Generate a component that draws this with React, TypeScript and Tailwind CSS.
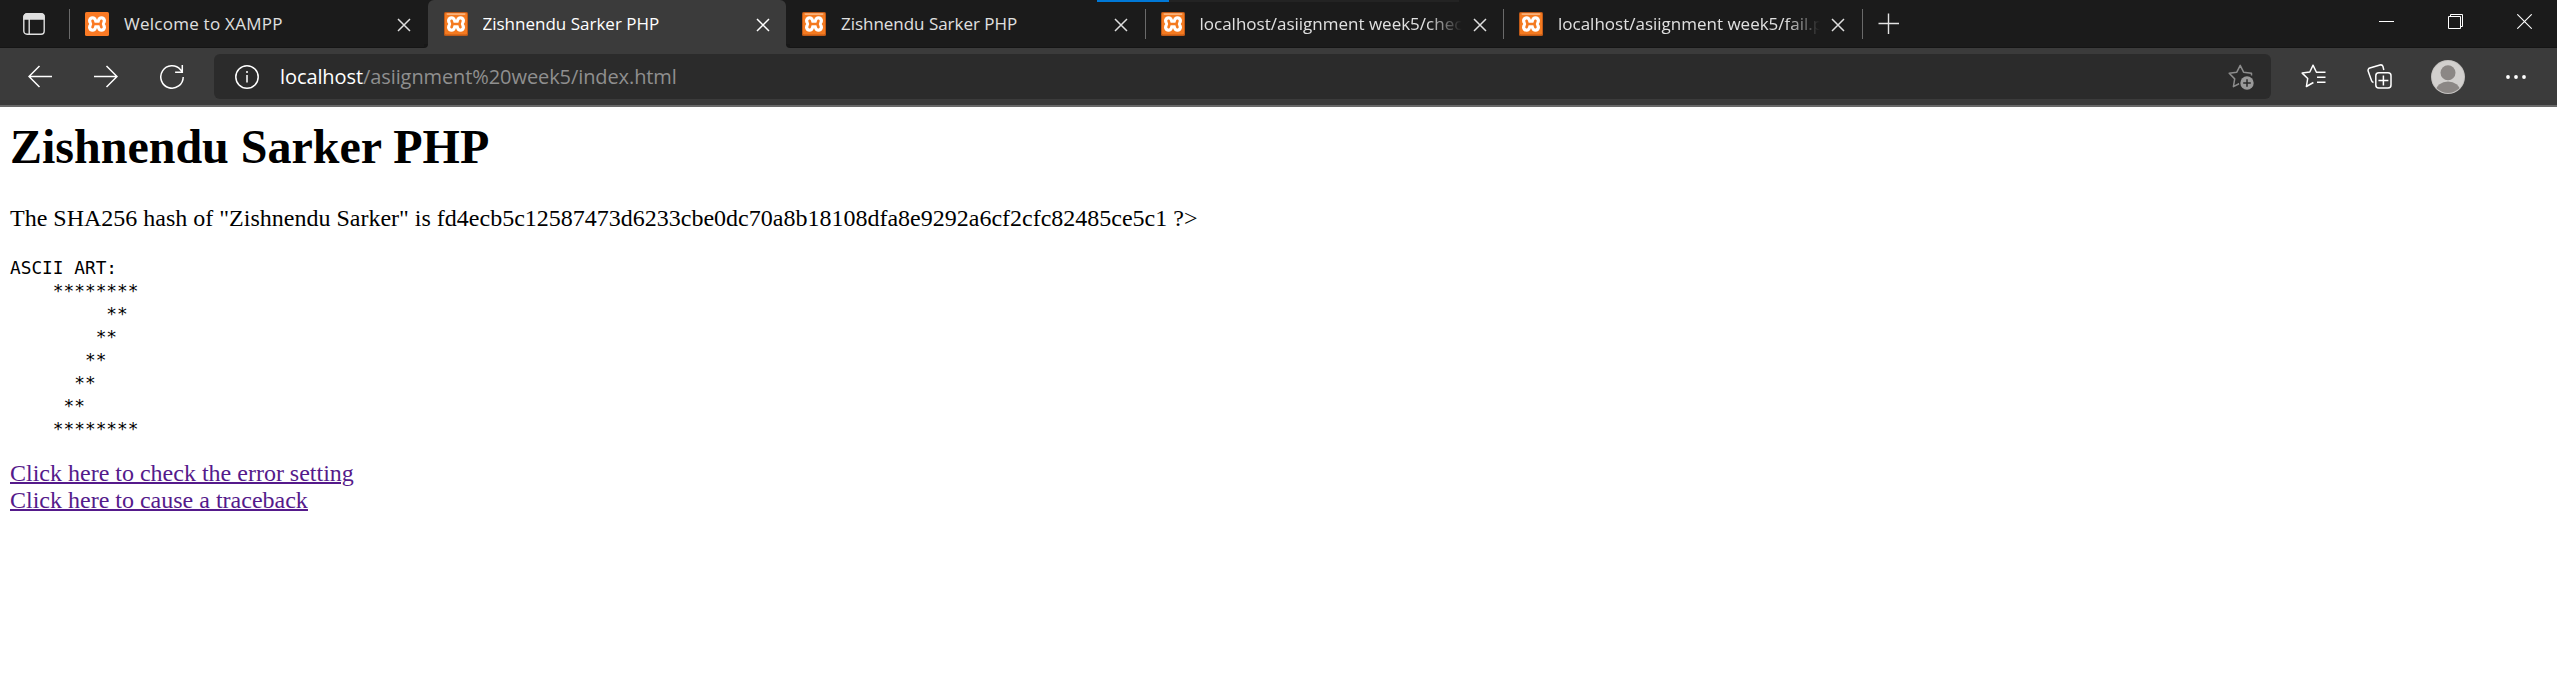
import React from "react";

function Favicon({ glossy }: { glossy: boolean }) {
  const orange = glossy ? "#f47a20" : "#fb7a24";
  return (
    <svg width="24" height="24" viewBox="0 0 24 24" className="shrink-0">
      <rect width="24" height="24" rx="1.5" fill={glossy ? "#c05a18" : orange} />
      {glossy && <rect x="1" y="1" width="22" height="21.5" rx="1" fill={orange} />}
      {glossy && <rect x="2.5" y="1.3" width="19" height="1.6" rx="0.8" fill="#f9b27c" />}
      <g fill="#fff">
        <circle cx="7.5" cy="8.700" r="4.500" />
        <circle cx="16.500" cy="8.700" r="4.500" />
        <circle cx="7.500" cy="15.300" r="4.500" />
        <circle cx="16.500" cy="15.300" r="4.500" />
        <rect x="8" y="7.800" width="8" height="8.400" />
      </g>
      <path
        d="M7.600 8.900L8.600 12L7.600 15.100M16.400 8.900L15.400 12L16.400 15.100M8.600 12h6.800"
        fill="none"
        stroke={orange}
        strokeWidth="2.700"
        strokeLinecap="round"
        strokeLinejoin="round"
      />
    </svg>
  );
}

function CloseIcon({ color }: { color: string }) {
  return (
    <svg width="14" height="14" viewBox="0 0 14 14" className="shrink-0" stroke={color} strokeWidth="1.5" fill="none">
      <path d="M1 1l12 12M13 1L1 13" />
    </svg>
  );
}

type TabProps = { title: string; active?: boolean; glossy?: boolean; divider?: boolean; faded?: boolean; spacing?: string };

function Tab({ title, active = false, glossy = true, divider = false, faded = false, spacing = "tracking-normal" }: TabProps) {
  return (
    <div
      className={
        "relative flex h-full w-[358.5px] shrink-0 items-center pl-4 " + (active ? "rounded-t-md bg-[#3b3b3b]" : "")
      }
    >
      {active && (
        <>
          <span className="absolute -left-1 bottom-0 h-1 w-1 bg-[#3b3b3b]">
            <span className="block h-full w-full rounded-br-[4px] bg-[#171717]" />
          </span>
          <span className="absolute -right-1 bottom-0 h-1 w-1 bg-[#3b3b3b]">
            <span className="block h-full w-full rounded-bl-[4px] bg-[#171717]" />
          </span>
        </>
      )}
      <Favicon glossy={glossy} />
      <div
        className={
          "ml-[15px] w-[262px] overflow-hidden whitespace-nowrap text-[17px] leading-6 " +
          spacing +
          (active ? " text-white" : " text-[#e0e0e0]") +
          (faded ? " [mask-image:linear-gradient(to_right,#000_228px,transparent_262px)]" : "")
        }
      >
        {title}
      </div>
      <div className="ml-[11px] mt-[2px] flex">
        <CloseIcon color={active ? "#fff" : "#dedede"} />
      </div>
      <div className={"-mr-px ml-auto h-[30px] w-px " + (divider ? "bg-[#6a6a6a]" : "")} />
    </div>
  );
}

function TabStrip() {
  return (
    <div className="relative flex h-12 items-stretch bg-[#1b1b1b] shadow-[inset_0_-1px_0_#151515]">
      <div className="absolute left-[1097px] top-0 flex h-[2px] w-[362px] bg-[#232323]">
        <div className="h-full w-[72px] bg-[#0078d7]" />
      </div>
      <div className="flex w-[69px] items-center pl-[23px]">
        <svg width="22" height="22" viewBox="0 0 22 22" fill="none" stroke="#e0e0e0" strokeWidth="1.4">
          <rect x="0.8" y="0.8" width="20.400" height="20.400" rx="3.200" />
          <path d="M1 6V4a3 3 0 0 1 3-3h14a3 3 0 0 1 3 3v2z" fill="#e0e0e0" />
          <path d="M6.200 6v15" />
        </svg>
      </div>
      <div className="my-auto -mr-px h-[30px] w-px bg-[#6a6a6a]" />
      <Tab title="Welcome to XAMPP" glossy={false} spacing="tracking-[0.25px]" />
      <Tab title="Zishnendu Sarker PHP" active />
      <Tab title="Zishnendu Sarker PHP" divider spacing="tracking-[-0.03px]" />
      <Tab title="localhost/asiignment week5/check.php" divider faded />
      <Tab title="localhost/asiignment week5/fail.php" divider faded />
      <svg width="22" height="22" viewBox="0 0 22 22" className="ml-4 mt-[13px]" stroke="#e4e4e4" strokeWidth="1.400">
        <path d="M0.500 10.500h20.500M10.500 0.500v20.500" />
      </svg>
      <div className="ml-auto mr-[25px] mt-[14px] flex h-[15px] gap-[54px]">
        <svg width="15" height="15" viewBox="0 0 15 15" stroke="#fff" strokeWidth="1">
          <path d="M0 7.500h15" />
        </svg>
        <svg width="15" height="15" viewBox="0 0 15 15" stroke="#fff" strokeWidth="1" fill="none">
          <path d="M0.500 2.500h12v12h-12zM2.500 2.500v-2h12v12h-2" />
        </svg>
        <svg width="15" height="15" viewBox="0 0 15 15" stroke="#fff" strokeWidth="1.100">
          <path d="M0.300 0.300l14.400 14.400M14.700 0.300L0.300 14.700" />
        </svg>
      </div>
    </div>
  );
}

function Toolbar() {
  return (
    <div className="flex h-[59px] items-center border-b-2 border-[#696969] bg-[#3b3b3b]">
      <div className="flex w-[214px] gap-[42px] pl-7">
        <svg width="24" height="24" viewBox="0 0 24 24" fill="none" stroke="#fff" strokeWidth="1.500">
          <path d="M24 11.500H1M11.500 1L1 11.500l10.500 10.500" />
        </svg>
        <svg width="24" height="24" viewBox="0 0 24 24" fill="none" stroke="#fff" strokeWidth="1.500">
          <path d="M0 11.500h23M12.500 1L23 11.500L12.500 22" />
        </svg>
        <svg width="24" height="24" viewBox="0 0 24 24" fill="none" stroke="#fff" strokeWidth="1.500">
          <path d="M23.200 12A11.200 11.200 0 1 1 20.500 4.700L22.500 7M22.300 0v7.200h-7.200" />
        </svg>
      </div>
      <div className="flex h-[45px] w-[2057px] items-center rounded-md bg-[#2b2b2b] pl-[21px] pr-[17px]">
        <svg width="24" height="24" viewBox="0 0 24 24" fill="none" stroke="#fff" strokeWidth="1.500">
          <circle cx="12" cy="12" r="11.200" />
          <path d="M12 10v7.500M12 6v2" />
        </svg>
        <div className="ml-[21px] whitespace-nowrap text-[20px] leading-7 tracking-[-0.09px] text-[#8f8f8f]">
          <span className="text-white">localhost</span>/asiignment%20week5/index.html
        </div>
        <svg width="26" height="26" viewBox="0 0 26 26" fill="none" stroke="#8c8c8c" strokeWidth="1.500" strokeLinejoin="round" className="ml-auto">
          <path d="M23.500 11.500V9.300L15.600 8.200L12.200 1.300L8.800 8.200L1.200 9.300L6.700 14.900L5.400 22.700L11.500 19.500" />
          <circle cx="19" cy="19" r="8" fill="#2b2b2b" stroke="none" />
          <circle cx="19" cy="19" r="6.700" fill="#999" stroke="none" />
          <path d="M19 15.200v7.600M15.200 19h7.600" stroke="#2b2b2b" />
        </svg>
      </div>
      <svg width="25" height="25" viewBox="0 0 25 25" fill="none" stroke="#fff" strokeWidth="1.500" strokeLinejoin="round" className="ml-[30px]">
        <path d="M17.500 8.300L15.300 8L12 1.200L8.800 8L1.200 9.100l5.500 5.400l-1.300 8l7-4M15 8.200h9.500M16 13.200h8.500M16 18.200h8.500" />
      </svg>
      <svg width="25" height="25" viewBox="0 0 25 25" fill="none" stroke="#fff" strokeWidth="1.500" className="ml-[41px]">
        <rect x="8.800" y="8.800" width="15.200" height="15.200" rx="3" />
        <path d="M16.400 11.500v10M11.400 16.400h10M6.500 18.500a3 3 0 0 1-2-2L1.200 7.200a2.500 2.500 0 0 1 1.600-3.200L13 1a2.500 2.500 0 0 1 3 1.600l.8 3.400" />
      </svg>
      <svg width="34" height="34" viewBox="0 0 34 34" className="ml-[39px]">
        <defs>
          <clipPath id="avatar">
            <circle cx="17" cy="17" r="16" />
          </clipPath>
        </defs>
        <circle cx="17" cy="17" r="17" fill="#c4c2c0" />
        <circle cx="17" cy="17" r="16" fill="#d2d0ce" />
        <g clipPath="url(#avatar)" fill="#8b8785">
          <circle cx="17" cy="12.800" r="7.500" />
          <ellipse cx="17" cy="31" rx="12" ry="9.500" />
        </g>
      </svg>
      <svg width="20" height="4" viewBox="0 0 20 4" fill="#fff" className="ml-[41px]">
        <circle cx="2" cy="2" r="1.900" />
        <circle cx="10" cy="2" r="1.900" />
        <circle cx="18" cy="2" r="1.900" />
      </svg>
    </div>
  );
}

const ASCII_ART = `ASCII ART:
    ********
         **
        **
       **
      **
     **
    ********`;

export default function App() {
  return (
    <div className="h-[679px] w-[2557px] overflow-hidden bg-white font-['Open_Sans','Noto_Sans',sans-serif]">
      <TabStrip />
      <Toolbar />
      <main className="pl-[10px] pt-[12px] font-['Liberation_Serif',serif] text-[24px] leading-[27px] text-black">
        <h1 className="text-[48px] font-bold leading-[55px]">Zishnendu Sarker PHP</h1>
        <p className="mt-[31px]">
          The SHA256 hash of "Zishnendu Sarker" is fd4ecb5c12587473d6233cbe0dc70a8b18108dfa8e9292a6cf2cfc82485ce5c1 ?&gt;
        </p>
        <pre className="mt-[24px] font-['DejaVu_Sans_Mono',monospace] text-[17.8px] leading-[23px]">{ASCII_ART}</pre>
        <div className="mt-[20px] flex flex-col items-start text-[#551a8b] underline decoration-2">
          <a>Click here to check the error setting</a>
          <a>Click here to cause a traceback</a>
        </div>
      </main>
    </div>
  );
}
